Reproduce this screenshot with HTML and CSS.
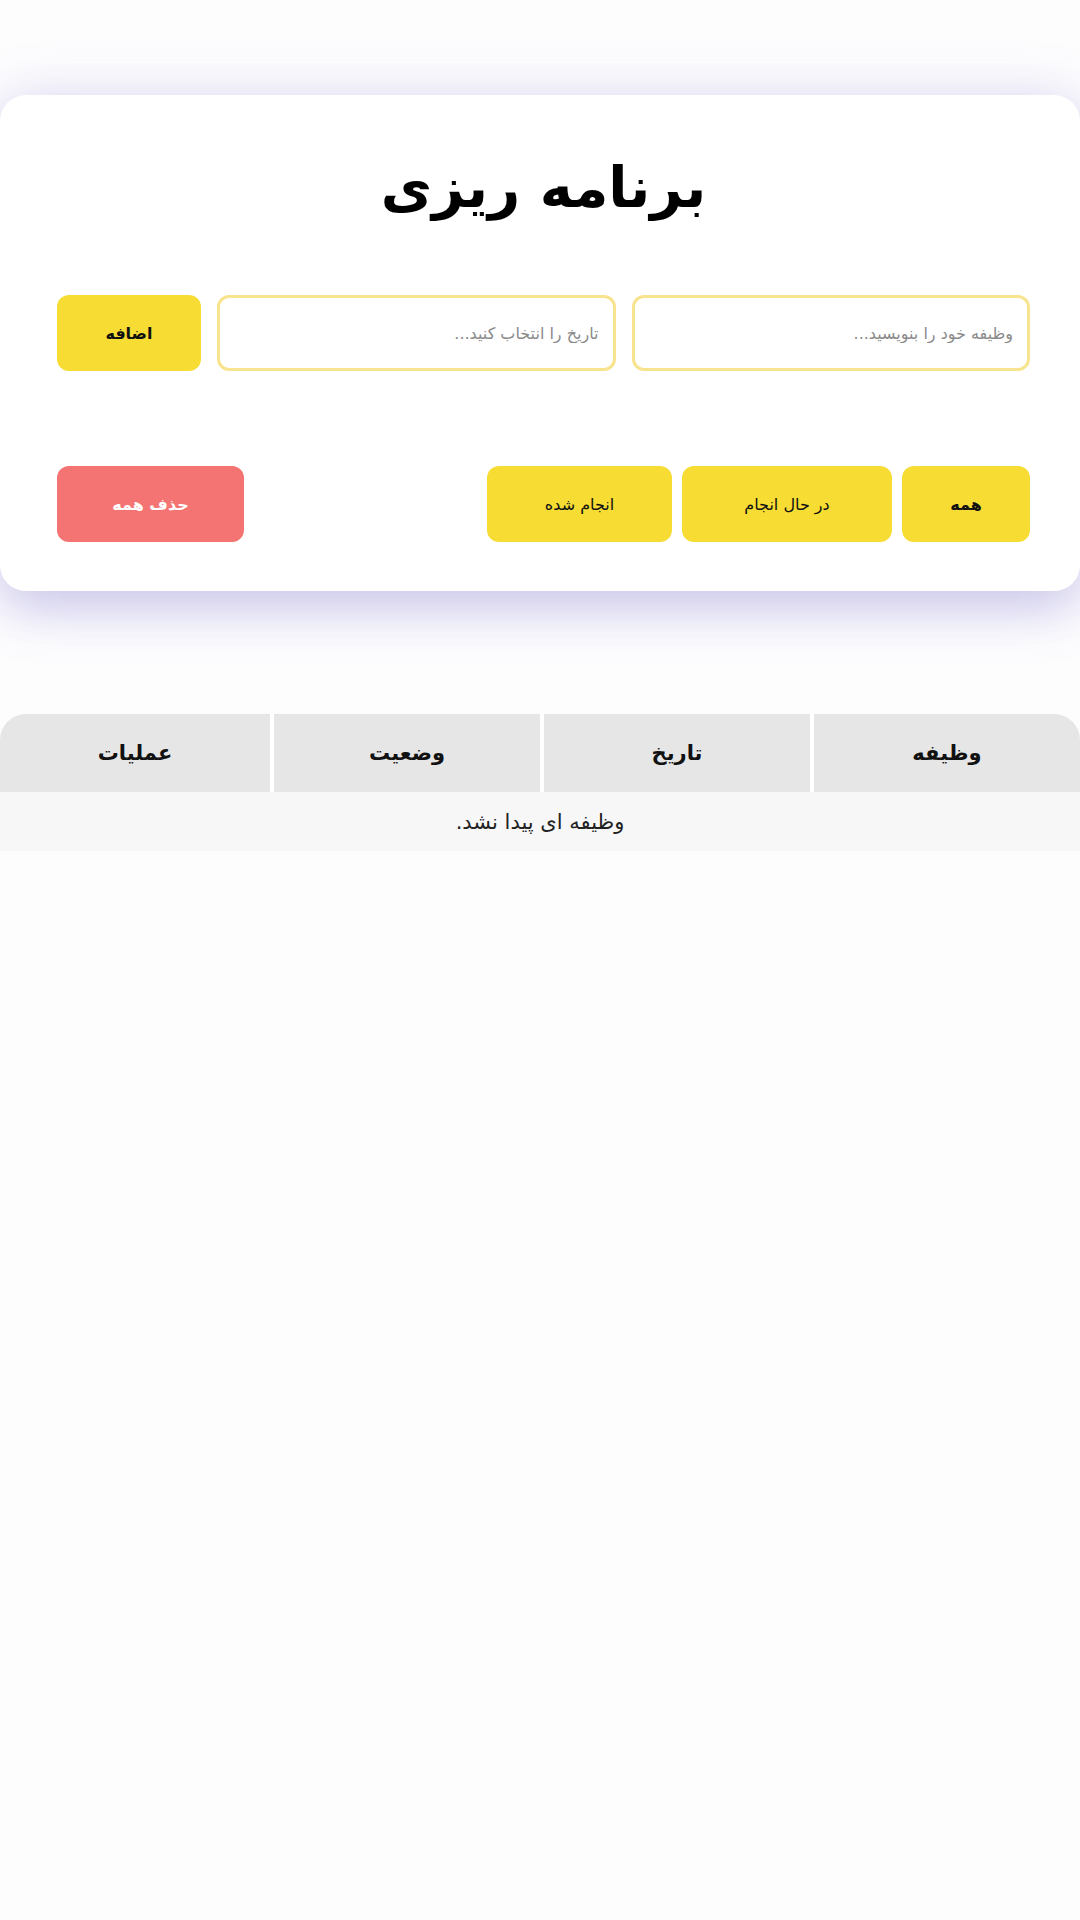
FILE: index.html
```html
<!DOCTYPE html>
<html lang="fa" dir="rtl">
<head>
<meta charset="utf-8">
<title>برنامه ریزی</title>
<link rel="stylesheet" href="styles.css">
</head>
<body>
<div class="page">
  <section class="card">
    <h1 class="title">برنامه ریزی</h1>
    <div class="add-row">
      <input class="field" type="text" placeholder="وظیفه خود را بنویسید...">
      <input class="field" type="text" placeholder="تاریخ را انتخاب کنید...">
      <button class="btn btn-add">اضافه</button>
    </div>
    <div class="filter-row">
      <div class="filters">
        <button class="btn btn-all">همه</button>
        <button class="btn btn-pending">در حال انجام</button>
        <button class="btn btn-done">انجام شده</button>
      </div>
      <button class="btn btn-delete">حذف همه</button>
    </div>
  </section>
  <table class="tasks">
    <thead>
      <tr>
        <th>وظیفه</th>
        <th>تاریخ</th>
        <th>وضعیت</th>
        <th>عملیات</th>
      </tr>
    </thead>
    <tbody>
      <tr>
        <td colspan="4" class="empty">وظیفه ای پیدا نشد.</td>
      </tr>
    </tbody>
  </table>
</div>
</body>
</html>
```
FILE: styles.css
```css
html, body {
  margin: 0;
  padding: 0;
  background: #fdfdfe;
}
body {
  font-family: "DejaVu Sans", sans-serif;
  color: #111;
}
.page {
  padding-top: 95px;
}
.card {
  background: #fff;
  border-radius: 26px;
  margin: 0;
  padding: 40px 50px 49px 57px;
  box-shadow: 0 0 60px rgba(110, 100, 190, 0.14), 0 20px 50px rgba(110, 100, 200, 0.28);
}
.title {
  margin: 0;
  text-align: center;
  font-size: 56px;
  font-weight: bold;
  line-height: 106px;
  color: #000;
}
.add-row {
  display: flex;
  gap: 16px;
  margin-top: 54px;
  height: 76px;
}
.field {
  flex: 1;
  min-width: 0;
  box-sizing: border-box;
  height: 76px;
  border: 3px solid #f8e48e;
  border-radius: 12px;
  padding: 0 14px;
  font-family: "DejaVu Sans", sans-serif;
  font-size: 16px;
  outline: none;
  background: #fff;
}
.field::placeholder {
  color: #8a8a8a;
}
.btn {
  border: none;
  border-radius: 12px;
  height: 76px;
  font-family: "DejaVu Sans", sans-serif;
  font-size: 16px;
  font-weight: bold;
  color: #111;
  background: #f6dc33;
  padding: 0;
}
.btn-add {
  width: 144px;
  flex: none;
}
.filter-row {
  display: flex;
  justify-content: space-between;
  margin-top: 95px;
}
.filters {
  display: flex;
  gap: 10px;
}
.btn-all { width: 128px; }
.btn-pending { width: 210px; font-weight: normal; }
.btn-done { width: 185px; font-weight: normal; }
.btn-delete {
  width: 187px;
  background: #f47373;
  color: #fff;
}
.tasks {
  margin-top: 123px;
  width: 100%;
  border-collapse: separate;
  border-spacing: 0;
  table-layout: fixed;
}
.tasks th {
  background: #e6e6e6;
  height: 78px;
  font-size: 21px;
  font-weight: bold;
  border-left: 4px solid #fff;
  padding: 0;
}
.tasks th:first-child {
  border-top-right-radius: 26px;
}
.tasks th:last-child {
  border-left: none;
  border-top-left-radius: 26px;
}
.tasks td.empty {
  background: #f7f7f7;
  height: 59px;
  text-align: center;
  font-size: 21px;
  color: #222;
  padding: 0;
}
```
